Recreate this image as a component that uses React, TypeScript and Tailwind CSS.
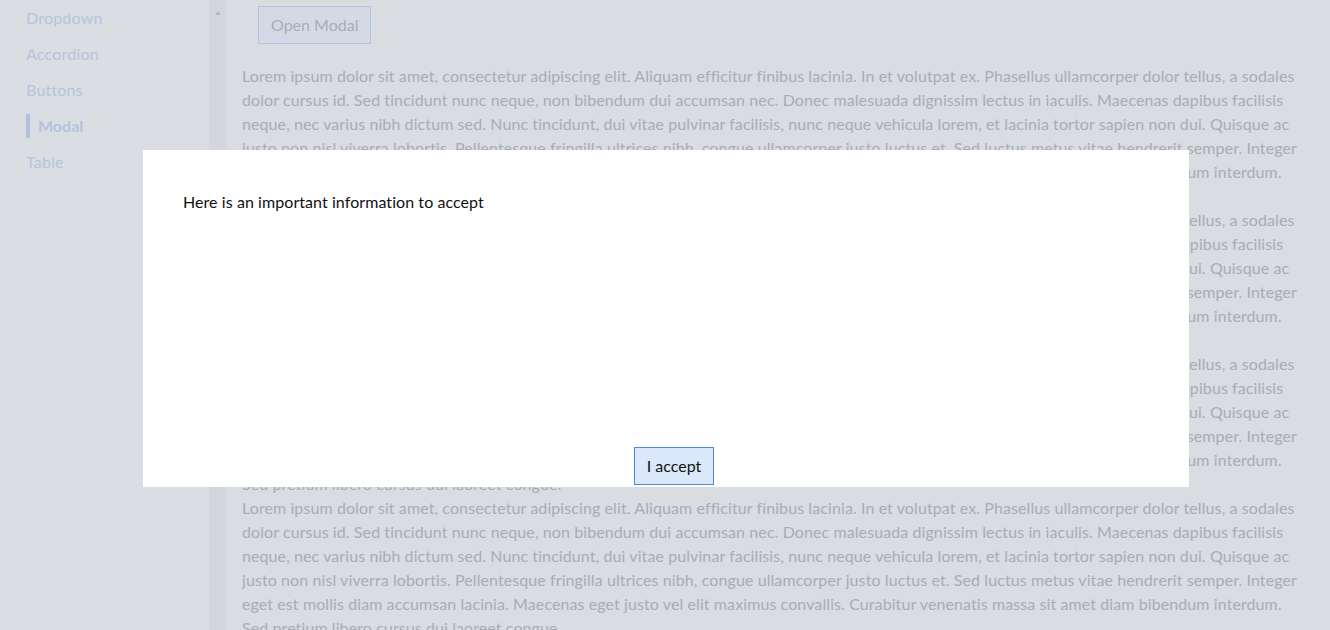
import { useState } from "react";

const lorem =
  "Lorem ipsum dolor sit amet, consectetur adipiscing elit. Aliquam efficitur finibus lacinia. In et volutpat ex. Phasellus ullamcorper dolor tellus, a sodales dolor cursus id. Sed tincidunt nunc neque, non bibendum dui accumsan nec. Donec malesuada dignissim lectus in iaculis. Maecenas dapibus facilisis neque, nec varius nibh dictum sed. Nunc tincidunt, dui vitae pulvinar facilisis, nunc neque vehicula lorem, et lacinia tortor sapien non dui. Quisque ac justo non nisl viverra lobortis. Pellentesque fringilla ultrices nibh, congue ullamcorper justo luctus et. Sed luctus metus vitae hendrerit semper. Integer eget est mollis diam accumsan lacinia. Maecenas eget justo vel elit maximus convallis. Curabitur venenatis massa sit amet diam bibendum interdum. Sed pretium libero cursus dui laoreet congue.";

const navItems = ["Dropdown", "Accordion", "Buttons", "Modal", "Table"];

const App = () => {
  const [open, setOpen] = useState(true);
  const active = "Modal";

  return (
    <div
      className="flex h-screen overflow-hidden bg-[#d9dce1]"
      style={{ fontFamily: "Lato, 'Open Sans', sans-serif" }}
    >
      <aside className="flex w-[226px] shrink-0 bg-[#dadde2]">
        <nav className="flex flex-1 flex-col pl-[26px]">
          {navItems.map((item) =>
            item === active ? (
              <div key={item} className="flex h-9 items-center">
                <span className="flex h-6 items-center border-l-4 border-[#b1c0de] pl-2 text-base font-bold text-[#b3c2df]">
                  {item}
                </span>
              </div>
            ) : (
              <a
                key={item}
                href="#"
                className="flex h-9 items-center text-base tracking-[0.2px] text-[#b6c4df]"
              >
                {item}
              </a>
            )
          )}
        </nav>
        <div className="flex w-[17px] shrink-0 justify-center bg-[#d3d6db] pt-[11px]">
          <div className="h-0 w-0 border-x-[3px] border-b-[4px] border-x-transparent border-b-[#b4b7bc]" />
        </div>
      </aside>

      <main className="flex-1 overflow-hidden px-4">
        <button
          className="ml-4 mt-[6px] mb-5 h-[38px] border border-[#b5c4de] bg-[#d3dae6] px-3 text-base text-[#a7adb8]"
          onClick={() => setOpen(true)}
        >
          Open Modal
        </button>
        {[0, 1, 2, 3].map((i) => (
          <div
            key={i}
            className="max-w-[1062px] text-base leading-6 tracking-[0.09px] text-[#a9acb3]"
          >
            {lorem}
          </div>
        ))}
      </main>

      {open && (
        <div className="fixed inset-0 flex items-center justify-center pt-[7px] pl-[2px]">
          <div className="flex h-[337px] w-[1046px] flex-col justify-between bg-white px-10 pt-10 pb-[2px]">
            <p className="text-base leading-6 tracking-[0.07px] text-[#111111]">
              Here is an important information to accept
            </p>
            <div className="flex justify-center pl-4">
              <button
                className="h-[38px] border border-[#4f89cf] bg-[#dbe8fb] px-3 text-base text-[#111111]"
                onClick={() => setOpen(false)}
              >
                I accept
              </button>
            </div>
          </div>
        </div>
      )}
    </div>
  );
};

export default App;
